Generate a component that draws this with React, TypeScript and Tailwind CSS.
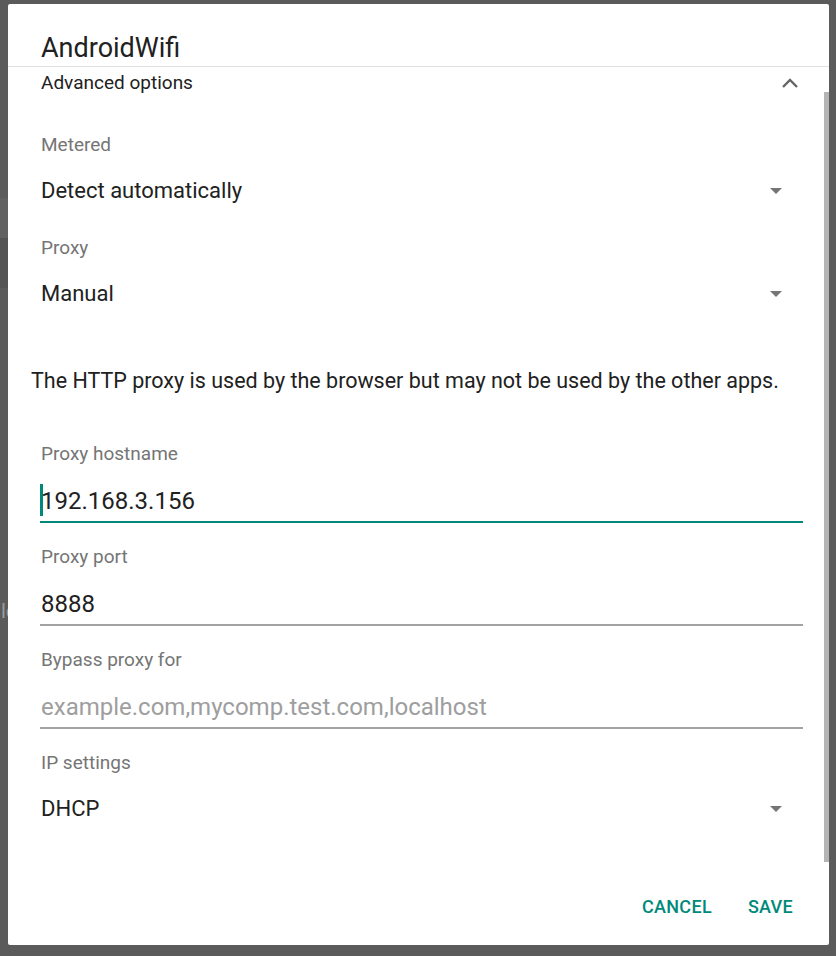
import { ReactNode } from "react";

function Caret() {
  return (
    <svg width="14" height="8" viewBox="0 0 14 8" className="shrink-0">
      <path d="M1 1h12L7 7z" fill="#757575" />
    </svg>
  );
}

function Label({ children, mt }: { children: ReactNode; mt: string }) {
  return (
    <div className={`${mt} h-[24px] leading-[24px] text-[19px] text-[#757575]`}>{children}</div>
  );
}

function Spinner({ value, mt }: { value: string; mt: string }) {
  return (
    <div className={`${mt} h-[28px] flex items-center justify-between pr-[46px]`}>
      <span className="text-[22px] text-[#212121] leading-[28px]">{value}</span>
      <Caret />
    </div>
  );
}

function Field({
  value,
  placeholder,
  focused,
}: {
  value?: string;
  placeholder?: string;
  focused?: boolean;
}) {
  return (
    <div
      className={`mt-[17px] mr-[26px] -ml-px pb-[4px] border-b-2 ${
        focused ? "border-[#00897b]" : "border-[#a3a3a3]"
      }`}
    >
      <div className="h-[34px] flex items-center text-[24px] leading-[34px]">
        {focused && <span className="w-[3px] h-[32px] bg-[#00897b] -mr-[3px]" />}
        {value ? (
          <span className="text-[#212121] pl-px pt-[2px]">{value}</span>
        ) : (
          <span className="text-[#9e9e9e] pl-px pt-[2px]">{placeholder}</span>
        )}
      </div>
    </div>
  );
}

export default function App() {
  return (
    <div
      className="relative w-[836px] h-[956px] overflow-hidden bg-[#5b5b5b] pt-[4px] pl-[8px]"
      style={{ fontFamily: "Roboto, 'Noto Sans', sans-serif" }}
    >
      {/* ── Background bits peeking out ─────────────────────── */}
      <div className="absolute left-0 top-[198px] w-[8px] h-[40px] bg-[#616161]" />
      <div className="absolute left-0 top-[238px] w-[8px] h-[50px] bg-[#545454]" />
      <span className="absolute left-[1px] top-[596px] text-[20px] text-[#9a9a9a]">lo</span>

      {/* ── Dialog ──────────────────────────────────────────── */}
      <div className="relative z-10 w-[821px] h-[941px] bg-white rounded-[2px] flex flex-col">
        <div className="h-[63px] border-b border-[#e0e0e0] pl-[33px] flex items-end">
          <h1 className="text-[27px] leading-[32px] pb-[2px] text-[#212121]">AndroidWifi</h1>
        </div>

        {/* Scrollbar */}
        <div className="absolute right-0 top-[88px] w-[5px] h-[770px] bg-[#b4b4b4]" />

        <div className="flex-1 pl-[33px]">
          <div className="h-[32px] flex items-center justify-between pr-[30px]">
            <span className="text-[19px] text-[#212121]">Advanced options</span>
            <svg width="18" height="12" viewBox="0 0 18 12">
              <path d="M2 10l7-7 7 7" fill="none" stroke="#666" strokeWidth="2.4" />
            </svg>
          </div>

          <Label mt="mt-[34px]">Metered</Label>
          <Spinner value="Detect automatically" mt="mt-[20px]" />

          <Label mt="mt-[31px]">Proxy</Label>
          <Spinner value="Manual" mt="mt-[20px]" />

          <p className="mt-[60px] -ml-[10px] h-[26px] leading-[26px] text-[21.5px] text-[#212121] whitespace-nowrap">
            The HTTP proxy is used by the browser but may not be used by the other apps.
          </p>

          <Label mt="mt-[48px]">Proxy hostname</Label>
          <Field value="192.168.3.156" focused />

          <Label mt="mt-[22px]">Proxy port</Label>
          <Field value="8888" />

          <Label mt="mt-[22px]">Bypass proxy for</Label>
          <Field placeholder="example.com,mycomp.test.com,localhost" />

          <Label mt="mt-[22px]">IP settings</Label>
          <Spinner value="DHCP" mt="mt-[20px]" />
        </div>

        <div className="h-[80px] flex items-start justify-end gap-[36px] pr-[36px] pt-[28px]">
          <button className="text-[18px] font-medium tracking-[0.3px] text-[#00897b]">CANCEL</button>
          <button className="text-[18px] font-medium tracking-[0.3px] text-[#00897b]">SAVE</button>
        </div>
      </div>
    </div>
  );
}
